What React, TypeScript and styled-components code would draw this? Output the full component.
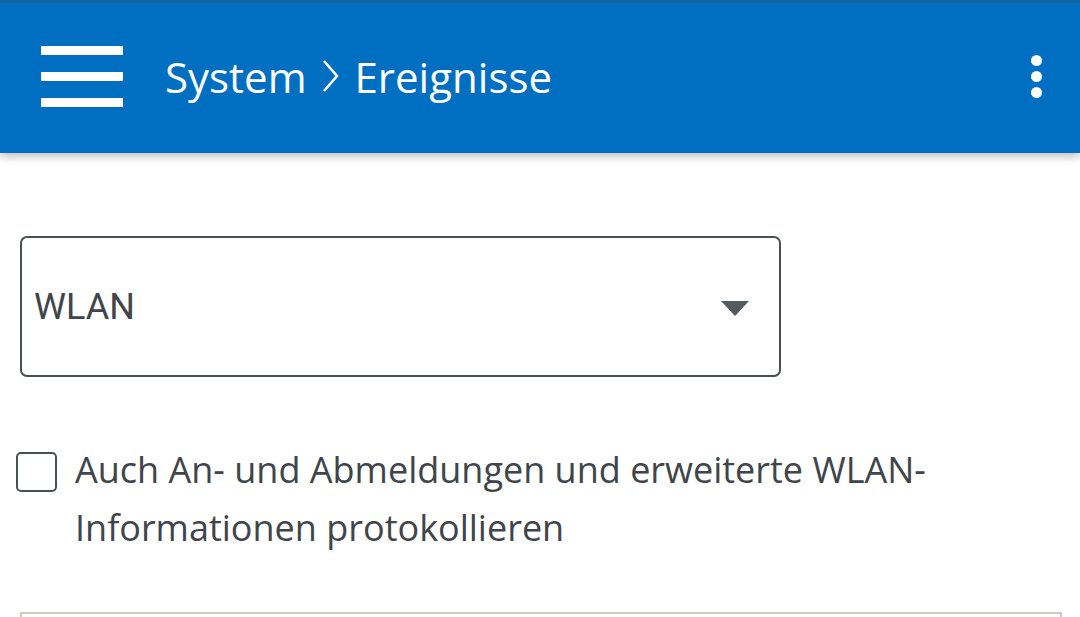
import React from "react";
import styled, { createGlobalStyle } from "styled-components";

const Global = createGlobalStyle`
  html, body { margin: 0; padding: 0; background: #ffffff; }
  body { font-family: "Open Sans", "Lato", sans-serif; overflow: hidden; }
  * { box-sizing: border-box; }
`;

const Page = styled.div`
  width: 1080px;
  height: 617px;
  overflow: hidden;
  background: #fff;
`;

const Header = styled.header`
  height: 153px;
  background: #006fc1;
  border-top: 3px solid #1663a3;
  display: flex;
  align-items: center;
  padding: 0 38px 4px 41px;
  box-shadow: 0 3px 9px rgba(0, 0, 0, 0.28);
  position: relative;
  z-index: 1;
`;

const Burger = styled.div`
  width: 82px;
  display: flex;
  flex-direction: column;
  gap: 17px;
  margin-right: 42px;
`;

const BurgerLine = styled.span`
  display: block;
  height: 9px;
  background: #ffffff;
`;

const Title = styled.h1`
  margin: 0;
  flex: 1;
  color: #ffffff;
  font-weight: 400;
  font-size: 42px;
  display: flex;
  align-items: center;
  gap: 14px;
`;

const Chevron = styled.svg`
  width: 20px;
  height: 34px;
`;

const Kebab = styled.div`
  display: flex;
  flex-direction: column;
  gap: 5px;
`;

const Dot = styled.span`
  width: 11px;
  height: 11px;
  border-radius: 50%;
  background: #fff;
`;

const Content = styled.main`
  padding: 83px 19px 0 20px;
  color: #3d4248;
`;

const Select = styled.div`
  width: 761px;
  height: 141px;
  border: 2px solid #4a4f56;
  border-radius: 7px;
  display: flex;
  align-items: center;
  justify-content: space-between;
  padding: 0 30px 0 12px;
  font-family: "Roboto", sans-serif;
  font-size: 36px;
  color: #40454b;
`;

const Caret = styled.span`
  width: 0;
  height: 0;
  border-left: 14px solid transparent;
  border-right: 14px solid transparent;
  border-top: 15px solid #555a61;
  margin-top: 4px;
`;

const CheckRow = styled.label`
  display: flex;
  align-items: flex-start;
  margin: 64px 0 0 -4px;
  gap: 18px;
`;

const Box = styled.span`
  flex: none;
  width: 41px;
  height: 40px;
  margin-top: 11px;
  border: 2.5px solid #4a4f56;
  border-radius: 5px;
`;

const Label = styled.span`
  font-size: 36px;
  line-height: 58px;
  color: #40454b;
  width: 880px;
`;

const Panel = styled.div`
  margin-top: 55px;
  width: 1042px;
  height: 60px;
  border: 2px solid #cbcbc6;
  border-bottom: none;
`;

export default function App() {
  return (
    <Page>
      <Global />
      <Header>
        <Burger>
          <BurgerLine />
          <BurgerLine />
          <BurgerLine />
        </Burger>
        <Title>
          <span>System</span>
          <Chevron viewBox="0 0 20 34">
            <polyline points="3,2 16,17 3,32" fill="none" stroke="#fff" strokeWidth="2.6" />
          </Chevron>
          <span>Ereignisse</span>
        </Title>
        <Kebab>
          <Dot />
          <Dot />
          <Dot />
        </Kebab>
      </Header>
      <Content>
        <Select>
          <span>WLAN</span>
          <Caret />
        </Select>
        <CheckRow>
          <Box />
          <Label>Auch An- und Abmeldungen und erweiterte WLAN-Informationen protokollieren</Label>
        </CheckRow>
        <Panel />
      </Content>
    </Page>
  );
}
